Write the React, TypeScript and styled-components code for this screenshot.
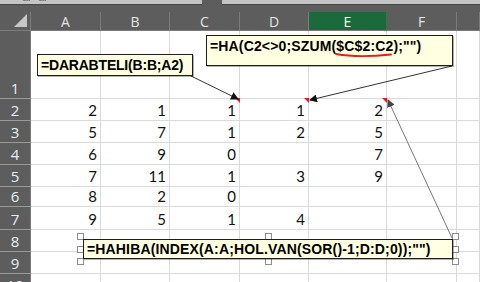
import { FC, Fragment } from 'react';
import styled, { createGlobalStyle } from 'styled-components';

const GlobalStyle = createGlobalStyle`
  html, body {
    margin: 0;
    padding: 0;
    background: #ffffff;
    overflow: hidden;
  }
`;

const COLUMN_LETTERS = ['A', 'B', 'C', 'D', 'E', 'F', ''];
const SELECTED_COLUMN = 'E';
const ROW_HEIGHTS = [68, 22, 22, 21.5, 22.5, 20, 22.5, 22, 22, 22];

const DATA: (number | '')[][] = [
  ['', '', '', '', '', '', ''],
  [2, 1, 1, 1, 2, '', ''],
  [5, 7, 1, 2, 5, '', ''],
  [6, 9, 0, '', 7, '', ''],
  [7, 11, 1, 3, 9, '', ''],
  [8, 2, 0, '', '', '', ''],
  [9, 5, 1, 4, '', '', ''],
  ['', '', '', '', '', '', ''],
  ['', '', '', '', '', '', ''],
  ['', '', '', '', '', '', ''],
];

// cells carrying a comment marker, as "row-column" indexes
const COMMENTED = ['1-2', '1-3', '1-4'];

const Window = styled.div`
  position: relative;
  width: 480px;
  height: 282px;
  overflow: hidden;
  background: #ffffff;
  font-family: 'Lato', 'Liberation Sans', sans-serif;
`;

const TitleStrip = styled.div`
  display: flex;
  gap: 20px;
  height: 12px;
  background: #5d5d5d;
`;

const TitlePanel = styled.div<{ $flex?: string }>`
  flex: ${props => props.$flex ?? '1'};
  height: 4px;
  overflow: hidden;
  background: #c4c4c4;
  border-bottom: 1px solid #464646;
  font-family: 'Liberation Sans', sans-serif;
  font-size: 11px;
  line-height: 11px;
  color: #6a6a6a;
  padding-left: 22px;
  & > span {
    display: block;
    margin-top: -8px;
  }
`;

const Sheet = styled.div`
  display: grid;
  grid-template-columns: 31px 70px 69px 70px 69px 78px 70px 1fr;
  grid-template-rows: 19px ${ROW_HEIGHTS.map(h => `${h}px`).join(' ')};
`;

const Corner = styled.div`
  position: relative;
  background: #5d5d5d;
  border-right: 1px solid #7c7c7c;
  border-bottom: 1px solid #7c7c7c;
  box-sizing: border-box;
  &::after {
    content: '';
    position: absolute;
    right: 3px;
    bottom: 3px;
    width: 0;
    height: 0;
    border-left: 13px solid transparent;
    border-bottom: 13px solid #c8c8c8;
  }
`;

const ColumnHeader = styled.div<{ $selected?: boolean }>`
  display: flex;
  align-items: center;
  justify-content: center;
  box-sizing: border-box;
  background: ${props => (props.$selected ? '#1b6a3b' : '#5d5d5d')};
  border-right: 1px solid ${props => (props.$selected ? '#2c7a4b' : '#7c7c7c')};
  border-bottom: 1px solid #7c7c7c;
  color: ${props => (props.$selected ? '#ffffff' : '#e4e4e4')};
  font-family: 'Open Sans', 'Liberation Sans', sans-serif;
  font-size: 14px;
`;

const RowHeader = styled.div`
  display: flex;
  align-items: flex-end;
  justify-content: center;
  box-sizing: border-box;
  background: #5d5d5d;
  border-right: 1px solid #7c7c7c;
  border-bottom: 1px solid #9a9a9a;
  color: #e8eef6;
  font-family: 'Open Sans', 'Liberation Sans', sans-serif;
  font-size: 15px;
  line-height: 20px;
`;

const Cell = styled.div<{ $comment?: boolean }>`
  position: relative;
  display: flex;
  align-items: flex-end;
  justify-content: flex-end;
  box-sizing: border-box;
  padding-right: 3px;
  border-right: 1px solid #dadada;
  border-bottom: 1px solid #dadada;
  color: #111111;
  font-size: 15px;
  line-height: 19px;
  &::after {
    content: '';
    display: ${props => (props.$comment ? 'block' : 'none')};
    position: absolute;
    top: -1px;
    right: -1px;
    width: 0;
    height: 0;
    border-left: 5px solid transparent;
    border-top: 5px solid #e21b1b;
  }
`;

const Comment = styled.div<{
  $left: number;
  $top: number;
  $width: number;
  $height: number;
  $pad?: number;
  $spacing?: number;
}>`
  position: absolute;
  left: ${props => props.$left}px;
  top: ${props => props.$top}px;
  width: ${props => props.$width}px;
  height: ${props => props.$height}px;
  box-sizing: border-box;
  padding: ${props => props.$pad ?? 1}px 3px 0 3px;
  background: #ffffe1;
  border: 1px solid #1e1e1e;
  box-shadow: 1px 1px 0 rgba(0, 0, 0, 0.3);
  font-family: 'Liberation Sans', 'Arial', sans-serif;
  font-weight: bold;
  font-size: 14px;
  letter-spacing: ${props => props.$spacing ?? 0}px;
  line-height: 18px;
  color: #000000;
  white-space: nowrap;
`;

const Scribbled = styled.span`
  position: relative;
  & > svg {
    position: absolute;
    left: 0;
    top: 15px;
    overflow: visible;
  }
`;

const SelectionFrame = styled.div`
  position: absolute;
  left: 80px;
  top: 236px;
  width: 375px;
  height: 25px;
`;

const Handle = styled.div<{ $x: number; $y: number }>`
  position: absolute;
  left: calc(${props => props.$x}% - 3px);
  top: calc(${props => props.$y}% - 3px);
  width: 5px;
  height: 5px;
  background: #ffffff;
  border: 1px solid #8c8c8c;
`;

const Arrows = styled.svg`
  position: absolute;
  left: 0;
  top: 0;
  pointer-events: none;
`;

const HANDLES = [
  [0, 0], [50, 0], [100, 0],
  [0, 50], [100, 50],
  [0, 100], [50, 100], [100, 100],
];

const App: FC = () => {
  return (
    <Window>
      <GlobalStyle />
      <TitleStrip>
        <TitlePanel $flex="0 0 180px">
          <span>ar&nbsp;&nbsp;ar</span>
        </TitlePanel>
        <TitlePanel />
      </TitleStrip>
      <Sheet>
        <Corner />
        {COLUMN_LETTERS.map((letter, i) => (
          <ColumnHeader key={i} $selected={letter === SELECTED_COLUMN}>
            {letter}
          </ColumnHeader>
        ))}
        {DATA.map((row, r) => (
          <Fragment key={r}>
            <RowHeader>{r + 1}</RowHeader>
            {row.map((value, c) => (
              <Cell key={c} $comment={COMMENTED.includes(`${r}-${c}`)}>
                {value}
              </Cell>
            ))}
          </Fragment>
        ))}
      </Sheet>

      <Arrows width={480} height={282}>
        <defs>
          <marker id="head" markerWidth="8" markerHeight="8" refX="7" refY="4" orient="auto" markerUnits="userSpaceOnUse">
            <path d="M0,0 L8,4 L0,8 z" fill="#111" />
          </marker>
          <marker id="headGray" markerWidth="8" markerHeight="8" refX="7" refY="4" orient="auto" markerUnits="userSpaceOnUse">
            <path d="M0,0 L8,4 L0,8 z" fill="#444" />
          </marker>
        </defs>
        <line x1="191" y1="76" x2="238" y2="99" stroke="#333" strokeWidth="1" markerEnd="url(#head)" />
        <line x1="452" y1="66" x2="310" y2="100" stroke="#333" strokeWidth="1" markerEnd="url(#head)" />
        <line x1="452" y1="238" x2="388" y2="100" stroke="#777" strokeWidth="1" markerEnd="url(#headGray)" />
      </Arrows>

      <Comment $left={37} $top={54} $width={156} $height={22} $spacing={-0.2}>
        =DARABTELI(B:B;A2)
      </Comment>
      <Comment $left={206} $top={35} $width={247} $height={31} $spacing={0.15}>
        =HA(C2&lt;&gt;0;SZUM(
        <Scribbled>
          $C$2:C2
          <svg width="60" height="6">
            <path d="M0 1 Q 22 5 55 1.5" fill="none" stroke="#e0201a" strokeWidth="1.8" strokeLinecap="round" />
          </svg>
        </Scribbled>
        );"")
      </Comment>
      <SelectionFrame>
        {HANDLES.map(([x, y]) => (
          <Handle key={`${x}-${y}`} $x={x} $y={y} />
        ))}
        <Comment $left={3} $top={3} $width={370} $height={20} $pad={0} $spacing={0.15}>
          =HAHIBA(INDEX(A:A;HOL.VAN(SOR()-1;D:D;0));"")
        </Comment>
      </SelectionFrame>
    </Window>
  );
};

export default App;
